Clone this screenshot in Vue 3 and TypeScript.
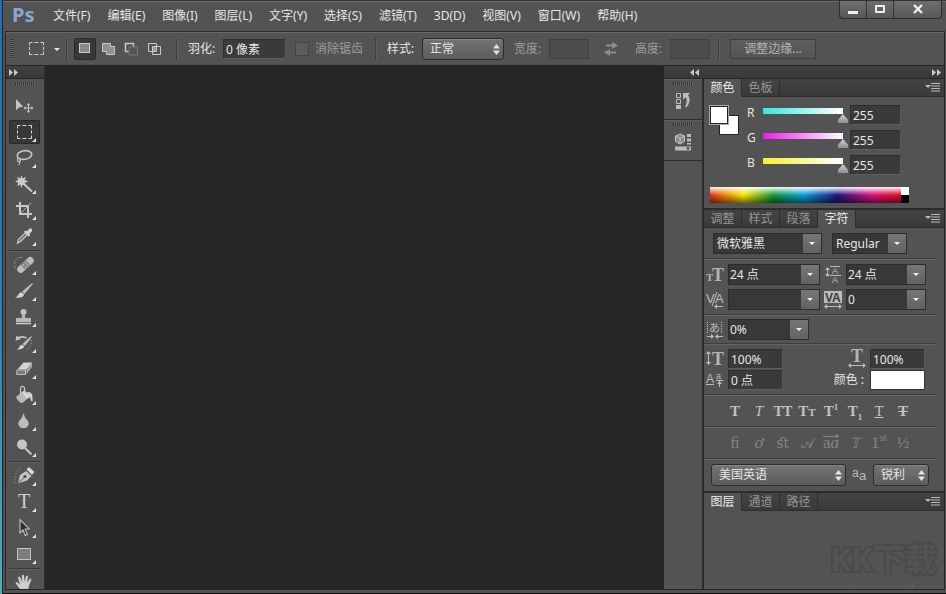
<script setup lang="ts">
import { ref } from 'vue'

interface Tool {
  name: string
  art: string
  flyout?: boolean
}

interface Channel {
  key: string
  tone: string
  value: number
}

const menus: string[] = [
  '文件(F)', '编辑(E)', '图像(I)', '图层(L)', '文字(Y)', '选择(S)',
  '滤镜(T)', '3D(D)', '视图(V)', '窗口(W)', '帮助(H)',
]

const toolGroups: Tool[][] = [
  [
    {
      name: '移动工具',
      art: '<path d="M4 5v11.5l2.8-2.900 4.400-.9z" fill="#c4c4c4"/><path d="M16.500 9.500v9M12 14h9" stroke="#c4c4c4" stroke-width="1"/><path d="M14.700 11.200l1.800-2.200 1.800 2.200zM14.700 16.800l1.800 2.200 1.800-2.200zM13.700 12.200L11.500 14l2.200 1.800zM19.300 12.200l2.200 1.800-2.200 1.800z" fill="#c4c4c4"/>',
    },
    {
      name: '矩形选框工具',
      flyout: true,
      art: '<path d="M5.500 8.500v-3h3M16.500 5.500h3v3M19.500 15.500v3h-3M8.500 18.500h-3v-3M10.500 5.500h4M10.500 18.500h4M5.500 10.500v3M19.500 10.500v3" fill="none" stroke="#d8d8d8"/>',
    },
    {
      name: '套索工具',
      flyout: true,
      art: '<ellipse cx="12.500" cy="9" rx="7.300" ry="4.300" transform="rotate(-8 12.500 9)" fill="none" stroke="#c4c4c4" stroke-width="1.600"/><circle cx="7" cy="14" r="1.600" fill="none" stroke="#c4c4c4" stroke-width="1.200"/><path d="M7.500 15.500q.8 2-.8 3.500" fill="none" stroke="#c4c4c4" stroke-width="1.200"/>',
    },
    {
      name: '魔棒工具',
      flyout: true,
      art: '<path d="M9.500 3l1.200 3.600L14 4.700l-1.300 3.400 3.500 1.400-3.500 1.300 1.300 3.400-3.300-1.700L9.500 16l-1.200-3.500L5 14.200l1.300-3.400-3.300-1.300 3.300-1.400L5 4.700l3.300 1.900z" fill="#cbcbcb"/><path d="M12.500 12.500l7.500 7" stroke="#c4c4c4" stroke-width="2.200"/>',
    },
    {
      name: '裁剪工具',
      flyout: true,
      art: '<path d="M8 4v12h12M4 8h12v12" fill="none" stroke="#c8c8c8" stroke-width="2"/><path d="M8.500 15.500L19 5" stroke="#b0b0b0" stroke-width="1"/>',
    },
    {
      name: '吸管工具',
      flyout: true,
      art: '<path d="M5.500 19l1-3.500 7-7 2 2-7 7z" fill="#6c6c6c" stroke="#c8c8c8" stroke-width="1.200"/><path d="M12 7.500l1.500-1 1.500.8 2.200-2.500q1.500-1 2.600.2t.1 2.600L17.400 9.800l.7 1.400-1.400 1.500z" fill="#d2d2d2"/>',
    },
  ],
  [
    {
      name: '污点修复画笔工具',
      flyout: true,
      art: '<g transform="rotate(-43 13.500 12)"><rect x="3.500" y="8.500" width="20" height="7" rx="3.500" fill="#bcbcbc"/><rect x="10" y="8.500" width="7" height="7" fill="#858585"/><path d="M11.500 10.500h1M14.500 10.500h1M11.500 13.500h1M14.500 13.500h1" stroke="#eee"/></g><path d="M10 4.500H7.500Q2.500 6 2.500 11t3 5.500" fill="none" stroke="#c4c4c4" stroke-dasharray="1 1.500"/>',
    },
    {
      name: '画笔工具',
      flyout: true,
      art: '<path d="M21 4q.5.5-8.500 11L10 12.800Q20 3.500 21 4z" fill="#bdbdbd"/><path d="M9.500 13.300l2.600 2.200Q11 19.500 3 18.500q3-.7 3.300-3 .8-2 3.200-2.200z" fill="#d4d4d4"/>',
    },
    {
      name: '仿制图章工具',
      flyout: true,
      art: '<circle cx="11.500" cy="7" r="3" fill="#c4c4c4"/><path d="M10.300 9h2.400l.6 4H19v4H4v-4h5.700z" fill="#b8b8b8"/><path d="M4 18.500h15" stroke="#d0d0d0" stroke-width="1.500"/>',
    },
    {
      name: '历史记录画笔工具',
      flyout: true,
      art: '<path d="M20 5q.5.500-7 10l-2.500-2Q19 4.500 20 5z" fill="#bdbdbd"/><path d="M10 13.500l2.300 2Q11 19 4.500 18.500q2.500-.7 2.700-2.500.8-2 2.800-2.500z" fill="#d4d4d4"/><path d="M5 7.500q4-3 9.500-.5" fill="none" stroke="#c4c4c4" stroke-width="1.600"/><path d="M3.500 9.500l1-5 4.500 3.800z" fill="#c4c4c4"/><path d="M19 9q1.500 6-4.500 9.500" fill="none" stroke="#c4c4c4" stroke-dasharray="1 1.500"/>',
    },
    {
      name: '橡皮擦工具',
      flyout: true,
      art: '<path d="M11.500 5.500h8.500l-5.500 7H5.500z" fill="#d4d4d4"/><path d="M5 13h8.500v4.500H4.500z" fill="#777" stroke="#bebebe"/><path d="M14.500 12.500l5.500-7v4.200l-5.500 7.500z" fill="#a8a8a8"/>',
    },
    {
      name: '油漆桶工具',
      flyout: true,
      art: '<path d="M4 14l8.500-7 5.500 6.500-7.500 6.500q-2 .5-4-2T4 14z" fill="#b8b8b8"/><path d="M12.500 7.500l5.500 6-3 2.500-5-6.500z" fill="#d8d8d8"/><path d="M8.500 11V5.500Q9 3 11 3.500t1.500 3V10" fill="none" stroke="#c8c8c8" stroke-width="1.200"/><path d="M15 9q5-.5 5.500 4.500v5q-2 0-2-2.500L17 13z" fill="#d4d4d4"/>',
    },
    {
      name: '模糊工具',
      flyout: true,
      art: '<path d="M11.500 4q.5 3.500 3.700 7.200 2.600 3.300.8 5.800-1.500 2.300-4.500 2.300T7 17q-1.800-2.500.8-5.800Q11 7.500 11.500 4z" fill="#bdbdbd"/>',
    },
    {
      name: '减淡工具',
      flyout: true,
      art: '<circle cx="10" cy="9.500" r="5" fill="#c6c6c6"/><path d="M13 13l6.500 6.500" stroke="#c6c6c6" stroke-width="2"/>',
    },
  ],
  [
    {
      name: '钢笔工具',
      flyout: true,
      art: '<path d="M6 19.500l2-8.500 6-4 5.500 5-4.500 4.500z" fill="#c4c4c4"/><path d="M14.500 5.500l2.500-2.500 5.500 5-2.500 3z" fill="#d6d6d6"/><path d="M6.500 19l6-6" stroke="#4a4a4a"/><circle cx="13" cy="12.500" r="1.500" fill="#4a4a4a"/><path d="M8 4.500Q2 8 3 20" fill="none" stroke="#aaa" stroke-dasharray="1 2"/>',
    },
    {
      name: '横排文字工具',
      flyout: true,
      art: '<text x="12" y="18" text-anchor="middle" font-family="Liberation Serif, serif" font-size="20" fill="#d0d0d0">T</text>',
    },
    {
      name: '路径选择工具',
      flyout: true,
      art: '<path d="M8 3.500v13.200l3-2.700 2.200 5.500 2.200-1-2.300-5.300 4-.4z" fill="#2c2c2c" stroke="#c4c4c4" stroke-width="1.100"/>',
    },
    {
      name: '矩形工具',
      flyout: true,
      art: '<rect x="5.500" y="6.500" width="13" height="11" fill="#7c7c7c" stroke="#c4c4c4"/>',
    },
  ],
  [
    {
      name: '抓手工具',
      art: '<path d="M8.500 19.500q-.5-1.800-2.500-4L3.500 12q.6-1.500 2.200-.5l2.200 2L6 6.500q.8-1.700 2.200-.2L10 11l-.2-6.500q1.200-1.700 2.200 0l.7 6.300 1.300-5.600q1.400-1.300 2 .3l-.8 6 2.500-3.700q1.600-.7 1.700.8l-2.300 5.900q-.4 3-1.600 5z" fill="#cecece"/>',
    },
  ],
]

const activeTool = ref('矩形选框工具')

const channels = ref<Channel[]>([
  { key: 'R', tone: 'cyan', value: 255 },
  { key: 'G', tone: 'magenta', value: 255 },
  { key: 'B', tone: 'yellow', value: 255 },
])

const selectionModes = [
  { name: '新选区', art: '<rect x="1.500" y="1.500" width="10" height="9" fill="#8a8a8a" stroke="#c8c8c8"/>' },
  { name: '添加到选区', art: '<path d="M1.500 1.500h8v3h4v8h-8v-3h-4z" fill="#909090" stroke="#c8c8c8"/>' },
  { name: '从选区减去', art: '<path d="M9.500 4.500v-3h-8v8h3" fill="none" stroke="#c8c8c8" stroke-width="1.500"/><path d="M5 5h8.500v8H5z" fill="#555" stroke="#787878"/>' },
  { name: '与选区交叉', art: '<path d="M1.500 1.500h8v8h-8zM5.500 4.500h8v8h-8z" fill="none" stroke="#c8c8c8"/><path d="M6 5h3v4H6z" fill="#999"/>' },
]
const activeMode = ref('新选区')

const styleTabs = ['调整', '样式', '段落', '字符']
const layerTabs = ['图层', '通道', '路径']
</script>

<template>
  <div class="desktop">
    <div class="window">
      <header class="menubar">
        <span class="logo">Ps</span>
        <nav class="menus">
          <button v-for="m in menus" :key="m" type="button" class="menu">{{ m }}</button>
        </nav>
        <div class="caption-buttons">
          <button type="button" aria-label="最小化"><svg width="12" height="12"><path d="M1 7h10v3H1z" fill="#f0f0f0" /></svg></button>
          <button type="button" aria-label="最大化"><svg width="12" height="12"><path d="M2 2h8v6H2z" fill="none" stroke="#f0f0f0" stroke-width="2" /></svg></button>
          <button type="button" class="close" aria-label="关闭"><svg width="12" height="12"><path d="M2 1l8 8M10 1l-8 8" stroke="#f0f0f0" stroke-width="2.400" /></svg></button>
        </div>
      </header>

      <div class="workspace">
        <div class="options">
          <span class="grip-v"></span>
          <button type="button" class="preset" aria-label="工具预设">
            <svg width="32" height="16">
              <path d="M1.500 4.500v-3h3M12.500 1.500h3v3M15.500 10.500v3h-3M4.500 13.500h-3v-3M6.500 1.500h4M6.500 13.500h4M1.500 6v3M15.500 6v3" fill="none" stroke="#d0d0d0" />
              <path d="M26 7h6l-3 3z" fill="#e8e8e8" />
            </svg>
          </button>
          <i class="rule"></i>
          <div class="modes">
            <button
              v-for="m in selectionModes" :key="m.name" type="button" :aria-label="m.name"
              class="mode" :class="{ on: m.name === activeMode }" @click="activeMode = m.name"
            >
              <svg width="15" height="14" v-html="m.art"></svg>
            </button>
          </div>
          <i class="rule"></i>
          <div class="field">
            <label for="feather">羽化:</label>
            <input id="feather" class="box feather" value="0 像素" />
          </div>
          <label class="check"><input type="checkbox" disabled />消除锯齿</label>
          <i class="rule"></i>
          <div class="field">
            <label for="mode">样式:</label>
            <span class="popup popup-mode">
              <select id="mode"><option>正常</option></select>
              <svg width="7" height="11"><path d="M0 4.500L3.500 0 7 4.500zM0 6.500L3.500 11 7 6.500z" fill="#e4e4e4" /></svg>
            </span>
          </div>
          <div class="field dim">
            <label for="w">宽度:</label>
            <input id="w" class="box size" disabled />
          </div>
          <button type="button" class="swap" aria-label="互换宽度和高度">
            <svg width="16" height="14"><path d="M3 3.500h7M6 10.500h7" stroke="#8c8c8c" stroke-width="2" /><path d="M9 0l6 3.500L9 7zM7 7l-6 3.500L7 14z" fill="#8c8c8c" /></svg>
          </button>
          <div class="field dim">
            <label for="h">高度:</label>
            <input id="h" class="box size" disabled />
          </div>
          <i class="rule"></i>
          <button type="button" class="refine">调整边缘...</button>
        </div>

        <div class="main">
          <aside class="toolbox">
            <div class="strip"><svg width="9" height="7"><path d="M0 0l4 3.500L0 7zM5 0l4 3.500L5 7z" fill="#c8c8c8" /></svg></div>
            <div class="tools">
              <span class="grip-h"></span>
              <div v-for="(g, i) in toolGroups" :key="i" class="tool-group">
                <button
                  v-for="t in g" :key="t.name" type="button" :aria-label="t.name"
                  class="tool" :class="{ on: t.name === activeTool }" @click="activeTool = t.name"
                >
                  <svg width="24" height="24" v-html="t.art"></svg>
                  <i v-if="t.flyout" class="flyout"></i>
                </button>
              </div>
            </div>
          </aside>

          <main class="canvas"></main>

          <aside class="dock">
            <div class="strip dock-strip">
              <svg width="9" height="7"><path d="M4 0L0 3.500 4 7zM9 0L5 3.500 9 7z" fill="#c8c8c8" /></svg>
              <svg width="9" height="7"><path d="M0 0l4 3.500L0 7zM5 0l4 3.500L5 7z" fill="#c8c8c8" /></svg>
            </div>
            <div class="dock-body">
              <div class="icon-column">
                <div class="icon-cell">
                  <span class="grip-h"></span>
                  <button type="button" aria-label="历史记录">
                    <svg width="18" height="20">
                      <path d="M2.500 2.500h4v4h-4zM2.500 8.500h4v4h-4z" fill="none" stroke="#bdbdbd" />
                      <path d="M2 14h5v4H2z" fill="#bdbdbd" />
                      <path d="M9 2h7l-2 2.200q4 5.300-1.500 12.300l-1.500-.5q3-6 .8-9.800L9 8.500z" fill="#bdbdbd" />
                    </svg>
                  </button>
                </div>
                <div class="icon-cell">
                  <span class="grip-h"></span>
                  <button type="button" aria-label="属性">
                    <svg width="18" height="20">
                      <path d="M6 2l4.500 2v5.500L6 12 1.500 9.500V4z" fill="#8a8a8a" stroke="#c4c4c4" />
                      <path d="M1.500 4L6 6.500 10.500 4M6 6.500V12" fill="none" stroke="#c4c4c4" />
                      <path d="M13 2h4v3h-4zM13 6.500h4v3h-4zM13 11h4v1.500h-4zM1 14.500h16v4H1z" fill="#bdbdbd" />
                      <path d="M12 15.500h4L14 18z" fill="#333" />
                    </svg>
                  </button>
                </div>
              </div>

              <div class="panels">
                <section class="panel">
                  <div class="tabs">
                    <button type="button" class="tab on">颜色</button>
                    <button type="button" class="tab">色板</button>
                    <button type="button" class="panel-menu" aria-label="面板菜单"><svg width="15" height="9"><path d="M0 2h6L3 5z" fill="#bbb" /><path d="M6 .5h9M6 3h9M6 5.500h9M6 8h9" stroke="#bbb" /></svg></button>
                  </div>
                  <div class="color-body">
                    <div class="color-main">
                      <div class="swatches">
                        <button type="button" class="swatch back" aria-label="背景色"></button>
                        <button type="button" class="swatch front" aria-label="前景色"></button>
                      </div>
                      <div class="channels">
                        <div v-for="c in channels" :key="c.key" class="channel">
                          <label :for="'ch-' + c.key">{{ c.key }}</label>
                          <input v-model.number="c.value" type="range" min="0" max="255" :class="c.tone" :aria-label="c.key" />
                          <input :id="'ch-' + c.key" v-model.number="c.value" class="box" />
                        </div>
                      </div>
                    </div>
                    <div class="spectrum"><span class="ends"></span></div>
                  </div>
                </section>

                <section class="panel">
                  <div class="tabs">
                    <button v-for="t in styleTabs" :key="t" type="button" class="tab" :class="{ on: t === '字符' }">{{ t }}</button>
                    <button type="button" class="panel-menu" aria-label="面板菜单"><svg width="15" height="9"><path d="M0 2h6L3 5z" fill="#bbb" /><path d="M6 .5h9M6 3h9M6 5.500h9M6 8h9" stroke="#bbb" /></svg></button>
                  </div>
                  <div class="char-body">
                    <div class="sec sec-font">
                      <span class="combo c-family"><select aria-label="字体"><option>微软雅黑</option></select></span>
                      <span class="combo c-weight"><select aria-label="字体样式"><option>Regular</option></select></span>
                    </div>
                    <div class="sec sec-size">
                      <label for="fs" aria-label="字体大小">
                        <svg width="18" height="18"><text x="0" y="15" font-size="11" class="g">T</text><text x="6" y="15" font-size="18" class="g">T</text></svg>
                      </label>
                      <span class="combo"><select id="fs"><option>24 点</option></select></span>
                      <label for="ld" aria-label="行距">
                        <svg width="18" height="18">
                          <path d="M3.500 2v8M6 .500h10M6 9.500h11" stroke="#bbb" /><path d="M1 4l2.500-3L6 4zM1 8l2.500 3L6 8z" fill="#bbb" />
                          <text x="8" y="8" font-size="9" class="s">A</text><text x="8" y="17" font-size="9" class="s">A</text>
                        </svg>
                      </label>
                      <span class="combo"><select id="ld"><option>24 点</option></select></span>
                      <label for="kn" aria-label="字距微调">
                        <svg width="18" height="18"><text x="0" y="12" font-size="13" class="s">V</text><text x="9" y="12" font-size="13" class="s">A</text><path d="M11 1L6 15M10 15.500h7" stroke="#bbb" /><path d="M11 13v5l-3-2.500z" fill="#bbb" /></svg>
                      </label>
                      <span class="combo"><select id="kn"><option></option></select></span>
                      <label for="tr" aria-label="字距调整">
                        <svg width="18" height="18"><path d="M0 0h18v12H0z" fill="#bbb" /><text x="1" y="11" font-size="12" class="k">VA</text><path d="M2 15.500h14" stroke="#bbb" /><path d="M3 13v5l-3-2.500zM15 13v5l3-2.500z" fill="#bbb" /></svg>
                      </label>
                      <span class="combo"><select id="tr"><option>0</option></select></span>
                    </div>
                    <div class="sec sec-tsume">
                      <label for="ts" aria-label="比例间距">
                        <svg width="18" height="18"><text x="3" y="11" font-size="11" class="cj">あ</text><path d="M1.500 1v11M15.500 1v11" stroke="#bbb" stroke-dasharray="1 1" /><path d="M1 15.500h5M12 15.500h5" stroke="#bbb" /><path d="M5 13v5l3-2.500zM12 13v5l-3-2.500z" fill="#bbb" /></svg>
                      </label>
                      <span class="combo c-tsume"><select id="ts"><option>0%</option></select></span>
                    </div>
                    <div class="sec sec-scale">
                      <label for="vs" aria-label="垂直缩放">
                        <svg width="18" height="18"><path d="M2.500 2v12" stroke="#bbb" /><path d="M0 4l2.500-3L5 4zM0 12l2.500 3L5 12z" fill="#bbb" /><text x="6" y="15" font-size="18" class="g">T</text></svg>
                      </label>
                      <input id="vs" class="box" value="100%" />
                      <label for="hs" aria-label="水平缩放" class="end">
                        <svg width="18" height="18"><text x="9" y="12" font-size="18" text-anchor="middle" class="g">T</text><path d="M2 15.500h14" stroke="#bbb" /><path d="M3 13v5l-3-2.500zM15 13v5l3-2.500z" fill="#bbb" /></svg>
                      </label>
                      <input id="hs" class="box" value="100%" />
                      <label for="bs" aria-label="基线偏移">
                        <svg width="18" height="18"><text x="0" y="12" font-size="12" class="s">A</text><text x="10" y="8" font-size="9" class="s">a</text><path d="M0 13.500h8M10 9.500h7M13.500 10v6" stroke="#bbb" /><path d="M11 13h5l-2.500-3z" fill="#bbb" /></svg>
                      </label>
                      <input id="bs" class="box" value="0 点" />
                      <span class="end color-label">颜色 :</span>
                      <button type="button" class="text-color" aria-label="文本颜色"></button>
                    </div>
                    <div class="sec glyphs">
                      <button type="button" aria-label="仿粗体"><b>T</b></button>
                      <button type="button" aria-label="仿斜体"><em>T</em></button>
                      <button type="button" aria-label="全部大写字母" class="caps">TT</button>
                      <button type="button" aria-label="小型大写字母">T<small>T</small></button>
                      <button type="button" aria-label="上标">T<sup>1</sup></button>
                      <button type="button" aria-label="下标">T<sub>1</sub></button>
                      <button type="button" aria-label="下划线"><u>T</u></button>
                      <button type="button" aria-label="删除线"><s>T</s></button>
                    </div>
                    <div class="sec glyphs off">
                      <button type="button" aria-label="标准连字">ﬁ</button>
                      <button type="button" aria-label="上下文替代字"><em>ơ</em></button>
                      <button type="button" aria-label="自由连字" class="liga">ﬆ</button>
                      <button type="button" aria-label="花饰字" class="swash">𝒜</button>
                      <button type="button" aria-label="文体替代字" class="over">a<em>a</em></button>
                      <button type="button" aria-label="标题替代字" class="swash"><em>𝕋</em></button>
                      <button type="button" aria-label="序数字">1<sup>st</sup></button>
                      <button type="button" aria-label="分数字">½</button>
                    </div>
                    <div class="sec-lang">
                      <span class="popup popup-lang">
                        <select aria-label="语言"><option>美国英语</option></select>
                        <svg width="7" height="11"><path d="M0 4.500L3.500 0 7 4.500zM0 6.500L3.500 11 7 6.500z" fill="#e4e4e4" /></svg>
                      </span>
                      <label for="aa" aria-label="消除锯齿方式"><svg width="15" height="16"><text x="0" y="10" font-size="12" class="s">a</text><text x="7" y="13" font-size="13" class="s">a</text></svg></label>
                      <span class="popup popup-aa">
                        <select id="aa"><option>锐利</option></select>
                        <svg width="7" height="11"><path d="M0 4.500L3.500 0 7 4.500zM0 6.500L3.500 11 7 6.500z" fill="#e4e4e4" /></svg>
                      </span>
                    </div>
                  </div>
                </section>

                <section class="panel layers">
                  <div class="tabs">
                    <button v-for="t in layerTabs" :key="t" type="button" class="tab" :class="{ on: t === '图层' }">{{ t }}</button>
                    <button type="button" class="panel-menu" aria-label="面板菜单"><svg width="15" height="9"><path d="M0 2h6L3 5z" fill="#bbb" /><path d="M6 .5h9M6 3h9M6 5.500h9M6 8h9" stroke="#bbb" /></svg></button>
                  </div>
                  <div class="layers-body">
                    <div class="mark"><b>KK下载</b><span>www.kkx.net</span></div>
                  </div>
                </section>
              </div>
            </div>
          </aside>
        </div>
      </div>
    </div>
  </div>
</template>

<style>
body {
  background: #000;
}
</style>

<style scoped>
.desktop,
.desktop * {
  box-sizing: border-box;
}
.desktop {
  height: 100vh;
  padding: 0 0 1px 2px;
  background: linear-gradient(#2a6cae, #2f7fb4 50%, #4fb0bb) left / 2px 100% no-repeat, #0c0c0c;
  font-family: "Noto Sans", "Noto Sans CJK SC", sans-serif;
  font-size: 12px;
  line-height: 16px;
  color: #e6e6e6;
}
button,
input,
select {
  font: inherit;
  color: inherit;
  margin: 0;
  padding: 0;
  border: 0;
  background: none;
  border-radius: 0;
}
svg {
  display: block;
}
.window {
  height: 100%;
  display: flex;
  flex-direction: column;
  padding: 0 1px 3px 2px;
  background: #535353;
  border-left: 1px solid #222;
  border-top: 1px solid #333;
  box-shadow: inset 0 1px #6c6c6c;
}
.menubar {
  flex: 0 0 30px;
  display: flex;
  align-items: flex-start;
  padding-left: 7px;
}
.logo {
  width: 41px;
  font-size: 20px;
  font-weight: 700;
  line-height: 27px;
  color: #87a9d2;
}
.menus {
  display: flex;
  gap: 17px;
  padding-top: 7px;
  flex: 1;
}
.menu {
  white-space: nowrap;
}
.caption-buttons {
  display: flex;
  height: 18px;
  margin-right: 3px;
  border: 1px solid #2c2c2c;
  border-top: 0;
  border-radius: 0 0 4px 4px;
  background: linear-gradient(#6e6e6e, #585858);
}
.caption-buttons button {
  width: 27px;
  display: grid;
  place-items: center;
  border-right: 1px solid #333;
}
.caption-buttons .close {
  width: 47px;
  border-right: 0;
}
.workspace {
  flex: 1;
  min-height: 0;
  display: flex;
  flex-direction: column;
  border: 1px solid #262626;
}
.options {
  flex: 0 0 33px;
  display: flex;
  align-items: center;
  padding-left: 4px;
  border-top: 1px solid #686868;
  white-space: nowrap;
}
.grip-v {
  width: 3px;
  height: 20px;
  margin-right: 15px;
  background: repeating-linear-gradient(#333 0 1px, #686868 1px 2px);
}
.rule {
  width: 2px;
  height: 22px;
  background: #3d3d3d;
  border-right: 1px solid #606060;
}
.preset {
  margin-right: 6px;
}
.modes {
  display: flex;
  gap: 1px;
  padding: 0 11px 0 6px;
}
.mode {
  width: 22px;
  height: 22px;
  display: grid;
  place-items: center;
}
.mode.on {
  background: #383838;
  border: 1px solid #2b2b2b;
  border-radius: 2px;
}
.field {
  display: flex;
  align-items: center;
  gap: 7px;
  padding-left: 10px;
}
.field label {
  width: 28px;
}
.box {
  height: 20px;
  background: #3a3a3a;
  border: 1px solid #2e2e2e;
  border-bottom-color: #5e5e5e;
  border-right-color: #5a5a5a;
  padding-left: 2px;
  min-width: 0;
}
.feather {
  width: 63px;
}
.size {
  width: 40px;
}
.dim,
.check {
  color: #9c9c9c;
}
.dim .box {
  background: #4c4c4c;
  border-color: #404040;
}
.check {
  display: flex;
  align-items: center;
  gap: 6px;
  padding: 0 12px 0 9px;
}
.check input {
  appearance: none;
  width: 14px;
  height: 14px;
  background: #5c5c5c;
  border: 1px solid #444;
}
.popup {
  position: relative;
  display: block;
}
.popup select {
  appearance: none;
  width: 100%;
  height: 22px;
  padding-left: 7px;
  border: 1px solid #2c2c2c;
  border-radius: 3px;
  background: linear-gradient(#747474, #5c5c5c);
  box-shadow: inset 0 1px #858585;
}
.popup svg {
  position: absolute;
  right: 4px;
  top: 6px;
  pointer-events: none;
}
.popup-mode {
  width: 82px;
}
.swap {
  margin: 0 6px 0 14px;
}
.field.dim + .rule {
  margin-left: 8px;
}
.refine {
  width: 86px;
  height: 20px;
  margin-left: 10px;
  line-height: 16px;
  color: #b4b4b4;
  background: linear-gradient(#5e5e5e, #545454);
  border: 1px solid #3f3f3f;
}
.main {
  flex: 1;
  min-height: 0;
  display: grid;
  grid-template-columns: 39px 1fr 281px;
  border-top: 1px solid #262626;
}
.strip {
  flex: 0 0 13px;
  display: flex;
  align-items: center;
  padding: 0 3px;
  background: linear-gradient(#424242, #383838);
  border-bottom: 1px solid #282828;
}
.toolbox {
  display: flex;
  flex-direction: column;
  min-height: 0;
  overflow: hidden;
  border-right: 1px solid #303030;
}
.tools {
  padding: 3px 3px 0;
}
.grip-h {
  display: block;
  width: 20px;
  height: 3px;
  background: repeating-linear-gradient(90deg, #303030 0 1px, #686868 1px 2px);
}
.tools .grip-h {
  margin: 0 auto 9px;
}
.tool-group + .tool-group {
  border-top: 1px solid #383838;
  box-shadow: inset 0 1px #606060;
  padding-top: 2px;
}
.tool {
  position: relative;
  display: block;
  width: 31px;
  height: 24px;
  margin-bottom: 2px;
  padding-left: 3px;
}
.tool.on {
  background: #383838;
  border-radius: 2px;
  box-shadow: inset 0 0 0 1px #292929;
}
.flyout {
  position: absolute;
  right: 4px;
  bottom: 2px;
  border: 2px solid transparent;
  border-right-color: #e4e4e4;
  border-bottom-color: #e4e4e4;
}
.canvas {
  background: #262626;
}
.dock {
  display: flex;
  flex-direction: column;
  min-height: 0;
  border-left: 1px solid #222;
}
.dock-strip {
  justify-content: space-between;
  padding-left: 26px;
}
.dock-body {
  flex: 1;
  min-height: 0;
  display: grid;
  grid-template-columns: 38px 1fr;
}
.icon-cell {
  height: 41px;
  padding-top: 3px;
  border-bottom: 1px solid #2c2c2c;
  box-shadow: inset 0 1px #5e5e5e;
}
.icon-cell .grip-h {
  margin: 0 auto 6px;
}
.icon-cell button {
  display: block;
  margin: 0 auto;
}
.panels {
  display: flex;
  flex-direction: column;
  min-height: 0;
  border-left: 2px solid #2c2c2c;
}
.panel + .panel {
  border-top: 2px solid #2c2c2c;
}
.tabs {
  display: flex;
  height: 18px;
  background: linear-gradient(#434343, #393939);
}
.tab {
  width: 38px;
  color: #959595;
  border-right: 1px solid #2e2e2e;
  border-bottom: 1px solid #2e2e2e;
  line-height: 16px;
}
.tab.on {
  color: #ececec;
  background: #535353;
  border-bottom-color: #535353;
}
.panel-menu {
  flex: 1;
  display: flex;
  justify-content: flex-end;
  align-items: center;
  padding-right: 4px;
  border-bottom: 1px solid #2e2e2e;
}
.color-body {
  padding: 8px 5px 5px;
}
.color-main {
  display: flex;
}
.swatches {
  position: relative;
  width: 38px;
}
.swatch {
  position: absolute;
  width: 20px;
  height: 20px;
  background: #fff;
  border: 1px solid #222;
}
.front {
  left: 0;
  top: 0;
  outline: 1px solid #aaa;
  outline-offset: -1px;
  box-shadow: inset 0 0 0 1px #222;
}
.back {
  left: 10px;
  top: 10px;
}
.channels {
  display: grid;
  gap: 5px;
}
.channel {
  display: flex;
}
.channel label {
  width: 11px;
}
.channel .box {
  width: 51px;
  margin-left: 2px;
}
.channel input[type="range"] {
  appearance: none;
  width: 90px;
  height: 18px;
}
.channel input[type="range"]::-webkit-slider-runnable-track {
  height: 18px;
  background: linear-gradient(90deg, #35e8e0, #fff) 5px 3px / calc(100% - 10px) 6px no-repeat;
}
.channel input[type="range"].magenta::-webkit-slider-runnable-track {
  background-image: linear-gradient(90deg, #f018f0, #fff);
}
.channel input[type="range"].yellow::-webkit-slider-runnable-track {
  background-image: linear-gradient(90deg, #f4f22c, #fff);
}
.channel input[type="range"]::-webkit-slider-thumb {
  appearance: none;
  width: 10px;
  height: 9px;
  margin-top: 9px;
  background: linear-gradient(#d0d0d0, #8e8e8e);
  clip-path: polygon(50% 0, 100% 65%, 100% 100%, 0 100%, 0 65%);
}
.spectrum {
  display: flex;
  justify-content: flex-end;
  width: 199px;
  height: 16px;
  margin: 12px 0 0 1px;
  background:
    linear-gradient(rgba(255, 255, 255, 0.95), rgba(255, 255, 255, 0) 50%, rgba(0, 0, 0, 0) 50%, rgba(0, 0, 0, 0.55)),
    linear-gradient(90deg, #e83010, #f8e800 17%, #109838 32%, #08a0e0 47%, #201880 64%, #e0107c 82%, #e01020 96%);
}
.ends {
  width: 8px;
  background: linear-gradient(#fff 50%, #000 50%);
}
.sec {
  border-bottom: 1px solid #3f3f3f;
  box-shadow: 0 1px #646464;
  margin: 0 7px 1px 0;
}
.sec label svg {
  overflow: visible;
}
.sec-font {
  display: flex;
  gap: 10px;
  padding: 5px 0 4px 9px;
}
.combo {
  display: block;
  height: 21px;
  border: 1px solid #2c2c2c;
  background: #383838;
  position: relative;
}
.combo select {
  appearance: none;
  width: 100%;
  height: 19px;
  padding-left: 3px;
  padding-right: 20px;
}
.sec-size .combo select,
.sec-tsume .combo select {
  padding-left: 1px;
}
.combo::before {
  content: "";
  position: absolute;
  right: 0;
  top: 0;
  width: 18px;
  height: 19px;
  background: linear-gradient(#767676, #626262);
  pointer-events: none;
}
.combo::after {
  content: "";
  position: absolute;
  right: 6px;
  top: 8px;
  border: 3px solid transparent;
  border-top-color: #f0f0f0;
  border-bottom: 0;
  pointer-events: none;
}
.c-family {
  width: 109px;
}
.c-weight {
  width: 75px;
}
.sec-size {
  display: grid;
  grid-template-columns: 18px 92px 18px 80px;
  column-gap: 4px;
  row-gap: 4px;
  align-items: center;
  padding: 4px 0 4px 2px;
}
.sec-tsume {
  display: flex;
  gap: 4px;
  align-items: center;
  padding: 3px 0 3px 2px;
}
.c-tsume {
  width: 81px;
}
.sec-scale {
  display: grid;
  grid-template-columns: 18px 55px 79px 55px;
  column-gap: 4px;
  row-gap: 1px;
  align-items: center;
  padding: 4px 0 4px 2px;
}
.end {
  justify-self: end;
}
.color-label {
  padding-right: 2px;
}
.text-color {
  height: 20px;
  background: #fff;
  border: 1px solid #333;
}
.g {
  font-family: "Liberation Serif", serif;
  font-weight: 700;
  fill: #b4b4b4;
}
.s {
  font-family: "Liberation Sans", sans-serif;
  fill: #bbb;
}
.k {
  font-family: "Liberation Sans", sans-serif;
  font-weight: 700;
  fill: #3c3c3c;
}
.cj {
  font-family: "Noto Sans CJK JP", sans-serif;
  fill: #bbb;
}
.glyphs {
  display: grid;
  grid-template-columns: repeat(8, 24px);
  height: 31px;
  padding: 6px 0 0 19px;
  align-items: baseline;
  justify-items: center;
  font-family: "Liberation Serif", "DejaVu Serif", serif;
  font-size: 15px;
  font-weight: 700;
  color: #c2c2c2;
}
.glyphs button {
  white-space: nowrap;
  line-height: 18px;
}
.glyphs em,
.glyphs u {
  font-weight: 400;
}
.glyphs .caps {
  font-size: 14px;
}
.glyphs small {
  font-size: 11px;
}
.glyphs sup,
.glyphs sub {
  font-size: 9px;
  line-height: 0;
}
.glyphs.off {
  color: #858585;
  font-size: 17px;
  font-weight: 400;
}
.glyphs.off sup {
  font-size: 11px;
}
.glyphs .liga {
  font-family: "DejaVu Serif", serif;
  font-size: 14px;
}
.glyphs .swash {
  font-size: 14px;
}
.over {
  position: relative;
  background: linear-gradient(#858585, #858585) center 2px / 16px 1px no-repeat;
}
.over::after {
  content: "";
  position: absolute;
  right: -2px;
  top: 0;
  border: 2px solid transparent;
  border-left: 3px solid #858585;
}
.sec-lang {
  display: flex;
  align-items: center;
  gap: 6px;
  padding: 4px 0 5px 7px;
}
.popup-lang {
  width: 135px;
}
.popup-aa {
  width: 56px;
}
.layers {
  flex: 1;
  min-height: 0;
  display: flex;
  flex-direction: column;
}
.layers .tabs {
  flex: 0 0 18px;
}
.layers-body {
  position: relative;
  flex: 1;
  overflow: hidden;
}
.mark {
  position: absolute;
  right: 0;
  top: 26px;
  width: 114px;
  white-space: nowrap;
  color: #535353;
}
.mark b {
  display: block;
  font-size: 32px;
  line-height: 43px;
  -webkit-text-stroke: 4px #4a4a4a;
  paint-order: stroke;
}
.mark span {
  display: block;
  font-size: 14px;
  line-height: 16px;
  padding-left: 2px;
  color: #5c5c5c;
}
</style>
